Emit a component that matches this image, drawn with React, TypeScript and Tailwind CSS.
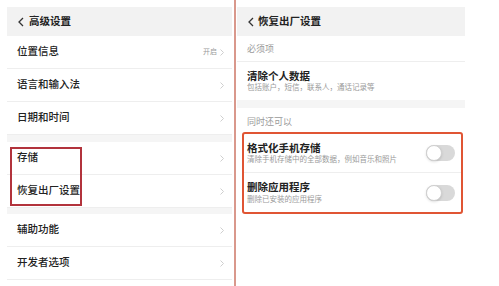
import React from "react";

function Back() {
  return (
    <svg width="6" height="10" viewBox="0 0 6 10" className="shrink-0">
      <polyline points="5,1 1,5 5,9" fill="none" stroke="#333" strokeWidth="1.3" />
    </svg>
  );
}

function Chevron() {
  return (
    <svg width="4" height="7" viewBox="0 0 4 7" className="shrink-0">
      <polyline points="0.5,0.5 3.5,3.5 0.5,6.5" fill="none" stroke="#cfcfcf" strokeWidth="1" />
    </svg>
  );
}

function Toggle() {
  return (
    <div className="w-[29px] h-[16px] rounded-full bg-[#d9d9d9] relative shrink-0">
      <div className="absolute left-0 top-0 w-[16px] h-[16px] rounded-full bg-white border border-[#d0d0d0] shadow-sm" />
    </div>
  );
}

function Row({ label, value }: { label: string; value?: string }) {
  return (
    <div className="h-[33px] flex items-center justify-between pl-[10px] pr-[8px] border-b border-[#eeeeee] bg-white">
      <span className="text-[10.5px] font-medium text-[#222]">{label}</span>
      <div className="flex items-center gap-[3px]">
        {value && <span className="text-[7px] text-[#9a9a9a]">{value}</span>}
        <Chevron />
      </div>
    </div>
  );
}

function SwitchItem({ title, desc, last }: { title: string; desc: string; last?: boolean }) {
  return (
    <div
      className={`h-[39px] flex items-center justify-between pl-[3px] pr-[6px] ${
        last ? "" : "border-b border-[#eeeeee]"
      }`}
    >
      <div className="flex flex-col leading-none">
        <span className="text-[10.5px] font-bold text-[#222]">{title}</span>
        <span className="text-[7.5px] text-[#9a9a9a] mt-[3px]">{desc}</span>
      </div>
      <Toggle />
    </div>
  );
}

export default function App() {
  return (
    <div className="w-[499px] h-[286px] bg-white flex overflow-hidden font-['Liberation_Sans','Noto_Sans_CJK_SC',sans-serif]">
      {/* 左侧：高级设置 */}
      <div className="ml-[7px] pt-[7px] w-[225px] relative">
        <div className="h-[29px] bg-[#f2f2f2] flex items-center gap-[5px] pl-[11px]">
          <Back />
          <span className="text-[10.5px] font-bold text-[#222]">高级设置</span>
        </div>
        <Row label="位置信息" value="开启" />
        <Row label="语言和输入法" />
        <Row label="日期和时间" />
        <div className="h-[7px] bg-[#f5f5f5]" />
        <Row label="存储" />
        <Row label="恢复出厂设置" />
        <div className="h-[6px] bg-[#f5f5f5]" />
        <Row label="辅助功能" />
        <Row label="开发者选项" />

        <div className="absolute left-[3px] top-[147px] w-[72px] h-[59px] border-2 border-[#b2333c]" />
      </div>

      {/* 分隔线 */}
      <div className="ml-[2px] w-[2px] h-full bg-[#d9988c]" />

      {/* 右侧：恢复出厂设置 */}
      <div className="ml-[1px] pt-[7px] w-[228px] flex flex-col">
        <div className="h-[29px] bg-[#f2f2f2] flex items-center gap-[4px] pl-[11px]">
          <Back />
          <span className="text-[10.5px] font-bold text-[#222]">恢复出厂设置</span>
        </div>
        <div className="h-[26px] flex items-end pb-[5px] pl-[10px] border-b border-[#eeeeee]">
          <span className="text-[9px] text-[#9a9a9a]">必须项</span>
        </div>
        <div className="h-[38px] flex flex-col justify-center pl-[10px] leading-none">
          <span className="text-[10.5px] font-bold text-[#222]">清除个人数据</span>
          <span className="text-[7.5px] text-[#9a9a9a] mt-[3px]">包括账户，短信，联系人，通话记录等</span>
        </div>
        <div className="h-[8px] bg-[#f5f5f5]" />
        <div className="h-[24px] flex items-end pb-[3px] pl-[10px]">
          <span className="text-[9px] text-[#9a9a9a]">同时还可以</span>
        </div>
        <div className="ml-[5px] mr-[2px] border-2 border-[#e05534] rounded-[3px]">
          <SwitchItem title="格式化手机存储" desc="清除手机存储中的全部数据，例如音乐和照片" />
          <SwitchItem title="删除应用程序" desc="删除已安装的应用程序" last />
        </div>
      </div>
    </div>
  );
}
